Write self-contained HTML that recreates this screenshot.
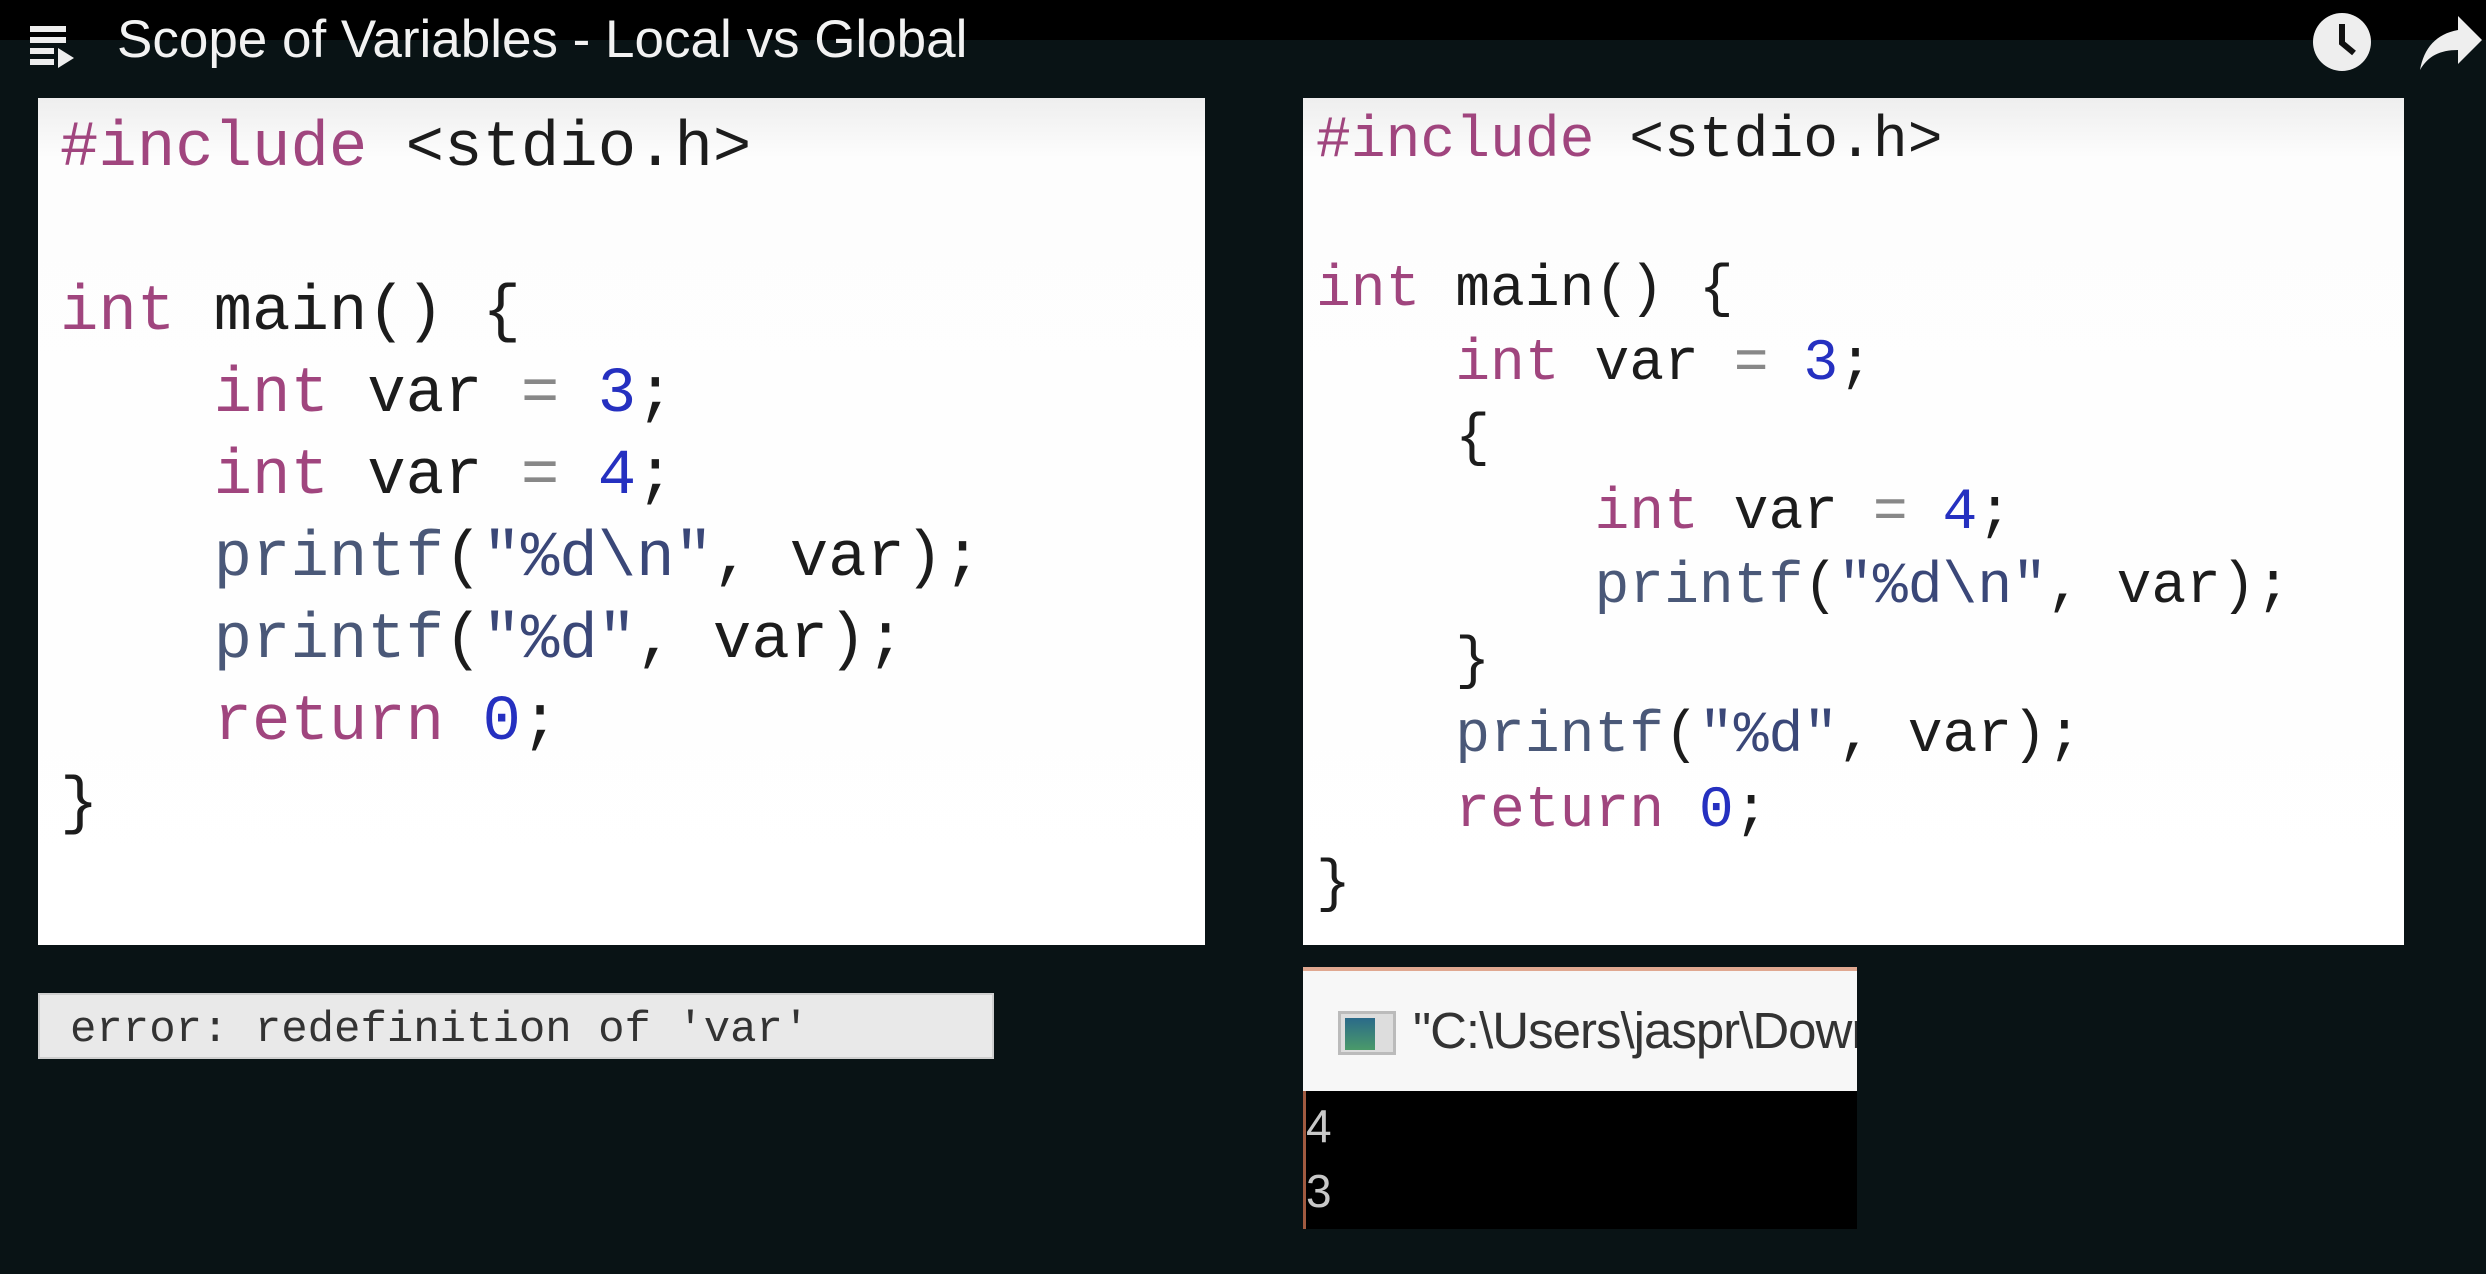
<!DOCTYPE html>
<html><head><meta charset="utf-8"><style>
*{margin:0;padding:0;box-sizing:border-box}
body{width:2486px;height:1274px;background:#091315;overflow:hidden;position:relative;font-family:"Liberation Sans",sans-serif}
.top{position:absolute;left:0;top:0;width:2486px;height:40px;background:#000}
.title{position:absolute;left:117px;top:5px;font-size:53px;color:#f2f2f2;line-height:70px;white-space:nowrap}
.panel{position:absolute;background:linear-gradient(#eeeeee,#fdfdfd 60px,#fff);}
.code{position:absolute;font-family:"Liberation Mono",monospace;white-space:pre;color:#1c1c1c}
.k{color:#a0457e}.n{color:#2530c0}.f{color:#4a5878}.s{color:#3a4778}.g{color:#888}
</style></head><body>
<div class="top"></div>
<svg style="position:absolute;left:30px;top:22px" width="50" height="50" viewBox="0 0 50 50">
<rect x="0" y="4" width="36" height="6" fill="#eee"/><rect x="0" y="15" width="36" height="6" fill="#eee"/><rect x="0" y="26" width="24" height="6" fill="#eee"/><rect x="0" y="37" width="24" height="6" fill="#eee"/><polygon points="28,26 28,46 44,36" fill="#eee"/></svg>
<div class="title">Scope of Variables - Local vs Global</div>
<svg style="position:absolute;left:2310px;top:10px" width="64" height="64" viewBox="0 0 64 64">
<circle cx="32" cy="32" r="29" fill="#eee"/><path d="M32 14 V33 L44 43" stroke="#111" stroke-width="6" fill="none"/></svg>
<svg style="position:absolute;left:2418px;top:12px" width="66" height="60" viewBox="0 0 66 60">
<path d="M40 4 L64 28 L40 52 V38 C22 38 10 44 2 58 C6 36 18 22 40 18 Z" fill="#eee"/></svg>

<div class="panel" style="left:38px;top:98px;width:1167px;height:847px"></div>
<div class="code" style="left:60px;top:108px;font-size:64px;line-height:82px"><span class="k">#include</span> &lt;stdio.h&gt;

<span class="k">int</span> main() {
    <span class="k">int</span> var <span class="g">=</span> <span class="n">3</span>;
    <span class="k">int</span> var <span class="g">=</span> <span class="n">4</span>;
    <span class="f">printf</span>(<span class="s">"%d\n"</span>, var);
    <span class="f">printf</span>(<span class="s">"%d"</span>, var);
    <span class="k">return</span> <span class="n">0</span>;
}</div>

<div class="panel" style="left:1303px;top:98px;width:1101px;height:847px"></div>
<div class="code" style="left:1316px;top:105px;font-size:58px;line-height:74.4px"><span class="k">#include</span> &lt;stdio.h&gt;

<span class="k">int</span> main() {
    <span class="k">int</span> var <span class="g">=</span> <span class="n">3</span>;
    {
        <span class="k">int</span> var <span class="g">=</span> <span class="n">4</span>;
        <span class="f">printf</span>(<span class="s">"%d\n"</span>, var);
    }
    <span class="f">printf</span>(<span class="s">"%d"</span>, var);
    <span class="k">return</span> <span class="n">0</span>;
}</div>

<div style="position:absolute;left:38px;top:993px;width:956px;height:66px;background:#e9e9e9;border:2px solid #cfcfcf"></div>
<div class="code" style="left:70px;top:1005px;font-size:44px;line-height:50px;color:#333">error: redefinition of 'var'</div>

<div style="position:absolute;left:1303px;top:967px;width:554px;height:124px;background:#f7f7f7;border-top:4px solid #e0a890;overflow:hidden">
<div style="position:absolute;left:35px;top:40px;width:58px;height:44px;border:3px solid #bbb;background:#ddd"><div style="position:absolute;left:4px;top:4px;width:30px;height:32px;background:linear-gradient(#2a6a8a,#4a9a6a)"></div></div>
<div style="position:absolute;left:110px;top:20px;font-size:51px;line-height:80px;color:#333;white-space:nowrap;letter-spacing:-1px">"C:\Users\jaspr\Downloads</div>
</div>
<div style="position:absolute;left:1303px;top:1091px;width:554px;height:138px;background:#000;border-left:3px solid #a05a40"></div>
<div style="position:absolute;left:1306px;top:1094px;font-size:46px;line-height:65px;color:#c8c8c8">4<br>3</div>
</body></html>
